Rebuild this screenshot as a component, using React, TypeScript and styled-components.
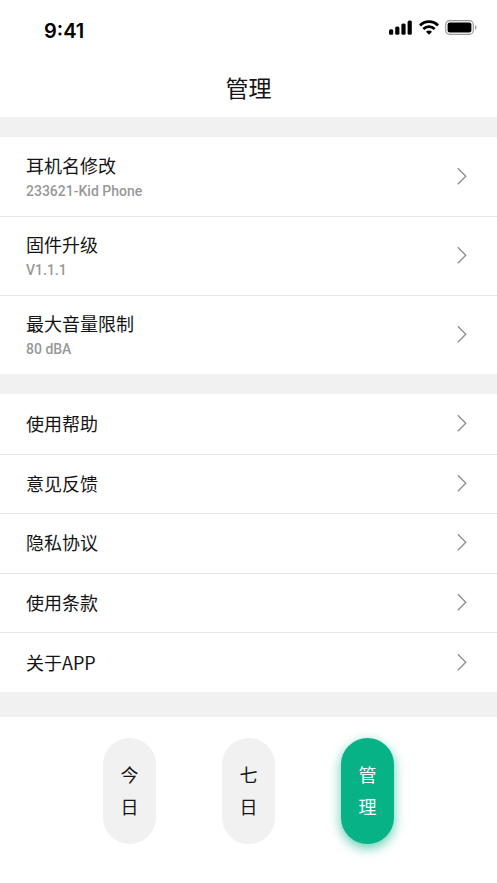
import React from 'react';
import styled, { createGlobalStyle } from 'styled-components';

const GlobalStyle = createGlobalStyle`
  *, *::before, *::after { box-sizing: border-box; }
  body {
    margin: 0;
    background: #ffffff;
    color: #141414;
    font-family: "Noto Sans CJK SC", sans-serif;
  }
`;

const Page = styled.div`
  display: flex;
  flex-direction: column;
  min-height: 100vh;
`;

const StatusBar = styled.div`
  display: flex;
  align-items: center;
  justify-content: space-between;
  height: 62px;
  padding: 0 20px 0 44px;
`;

const Clock = styled.time`
  color: #000000;
  font: 600 20px/24px Inter, sans-serif;
`;

const StatusIcons = styled.div`
  display: flex;
  align-items: center;
  gap: 6px;
  padding-bottom: 7px;
`;

const Header = styled.header`
  display: flex;
  justify-content: center;
  height: 55px;
  padding-top: 9px;
`;

const Title = styled.h1`
  margin: 0;
  font-size: 23px;
  line-height: 32px;
  font-weight: 400;
`;

const Content = styled.main`
  display: flex;
  flex-direction: column;
  gap: 20px;
  padding: 20px 0 25px;
  background: #f1f1f1;
`;

const Group = styled.ul<{ $minHeight: number }>`
  display: grid;
  grid-auto-rows: 1fr;
  min-height: ${({ $minHeight }) => $minHeight}px;
  margin: 0;
  padding: 0;
  list-style: none;
  background: #ffffff;
`;

const Item = styled.li`
  display: flex;

  & + & { border-top: 1px solid #e8e8e8; }
`;

const RowButton = styled.button`
  display: flex;
  flex: 1;
  align-items: center;
  justify-content: space-between;
  padding: 0 30px 2px 26px;
  border: 0;
  background: none;
  color: inherit;
  font-family: inherit;
  text-align: left;
  cursor: pointer;
`;

const RowText = styled.span<{ $detailed: boolean }>`
  display: flex;
  flex-direction: column;
  padding-top: ${({ $detailed }) => ($detailed ? 4 : 0)}px;
`;

const RowLabel = styled.span`
  font-size: 18px;
  line-height: 26px;
`;

const RowDetail = styled.span`
  color: #989898;
  font: 500 14px/26px Roboto, sans-serif;
`;

const TabBar = styled.nav`
  display: flex;
  justify-content: center;
  gap: 66px;
  padding: 21px 0 39px;
`;

const Tab = styled.button<{ $active: boolean }>`
  display: flex;
  align-items: center;
  justify-content: center;
  width: 53px;
  height: 106px;
  padding: 0 0 2px;
  border: 0;
  border-radius: 27px;
  background: ${({ $active }) => ($active ? '#07b286' : '#f1f1f1')};
  box-shadow: ${({ $active }) => ($active ? '0 4px 12px rgba(7, 178, 134, 0.65)' : 'none')};
  color: ${({ $active }) => ($active ? '#ffffff' : '#141414')};
  font-family: inherit;
  cursor: pointer;
`;

const TabLabel = styled.span`
  width: 18px;
  font-size: 18px;
  line-height: 32px;
`;

const SignalIcon = () => (
  <svg width="24" height="15" viewBox="0 0 24 15" aria-hidden="true">
    <rect x="0" y="9.2" width="4.2" height="5.6" rx="1.6" />
    <rect x="6.2" y="6.5" width="4.2" height="8.3" rx="1.5" />
    <rect x="12.4" y="3.5" width="4.2" height="11.3" rx="1.5" />
    <rect x="18.6" y="0.4" width="4.2" height="14.4" rx="1.5" />
  </svg>
);

const WifiIcon = () => (
  <svg width="20" height="15" viewBox="0 0 20 15" aria-hidden="true">
    <g fill="none" stroke="#000" strokeWidth="2.8">
      <path d="M1 5.4C6 .4 14 .4 19 5.4" />
      <path d="M4.3 9c3.3-3.1 8.1-3.1 11.4 0" />
    </g>
    <path d="M7 11.7c1.7-1.5 4.3-1.5 6 0L10 14.8z" />
  </svg>
);

const BatteryIcon = () => (
  <svg width="32" height="15" viewBox="0 0 32 15" aria-hidden="true">
    <rect x="0.7" y="0.7" width="27.6" height="13.6" rx="3.8" fill="none" stroke="#999" strokeWidth="1.2" />
    <rect x="2.6" y="2.6" width="23.8" height="9.8" rx="2" />
    <path d="M30 5.2c2 .7 2 3.9 0 4.6z" fill="#999" />
  </svg>
);

const Chevron = () => (
  <svg width="10" height="18" viewBox="0 0 10 18" aria-hidden="true">
    <path d="M0.8 1.2L8.8 9.2L0.8 17.2" fill="none" stroke="#8c8c8c" strokeWidth="1.3" />
  </svg>
);

interface Entry {
  label: string;
  detail?: string;
}

const deviceEntries: Entry[] = [
  { label: '耳机名修改', detail: '233621-Kid Phone' },
  { label: '固件升级', detail: 'V1.1.1' },
  { label: '最大音量限制', detail: '80 dBA' },
];

const infoEntries: Entry[] = [
  { label: '使用帮助' },
  { label: '意见反馈' },
  { label: '隐私协议' },
  { label: '使用条款' },
  { label: '关于APP' },
];

const tabs = ['今日', '七日', '管理'];

const EntryGroup = ({ entries, minHeight }: { entries: Entry[]; minHeight: number }) => (
  <Group $minHeight={minHeight}>
    {entries.map(({ label, detail }) => (
      <Item key={label}>
        <RowButton type="button">
          <RowText $detailed={Boolean(detail)}>
            <RowLabel>{label}</RowLabel>
            {detail && <RowDetail>{detail}</RowDetail>}
          </RowText>
          <Chevron />
        </RowButton>
      </Item>
    ))}
  </Group>
);

export default function App() {
  const [active, setActive] = React.useState('管理');

  return (
    <Page lang="zh-CN">
      <GlobalStyle />
      <StatusBar>
        <Clock>9:41</Clock>
        <StatusIcons>
          <SignalIcon />
          <WifiIcon />
          <BatteryIcon />
        </StatusIcons>
      </StatusBar>
      <Header>
        <Title>管理</Title>
      </Header>
      <Content>
        <EntryGroup entries={deviceEntries} minHeight={237} />
        <EntryGroup entries={infoEntries} minHeight={298} />
      </Content>
      <TabBar>
        {tabs.map((tab) => (
          <Tab
            key={tab}
            type="button"
            $active={tab === active}
            aria-current={tab === active ? 'page' : undefined}
            onClick={() => setActive(tab)}
          >
            <TabLabel>{tab}</TabLabel>
          </Tab>
        ))}
      </TabBar>
    </Page>
  );
}
